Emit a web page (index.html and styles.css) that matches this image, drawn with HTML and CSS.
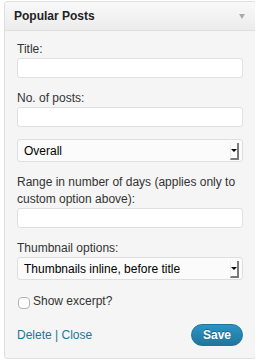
FILE: index.html
```html
<!DOCTYPE html>
<html lang="en">
<head>
  <meta charset="UTF-8">
  <title>Popular Posts widget</title>
  <link rel="stylesheet" href="styles.css">
</head>
<body>
  <div class="widget">
    <div class="widget-top">
      <h3>Popular Posts</h3>
      <span class="toggle"></span>
    </div>

    <div class="widget-inside">
      <div class="field">
        <label for="title">Title:</label>
        <input type="text" id="title">
      </div>

      <div class="field">
        <label for="limit">No. of posts:</label>
        <input type="text" id="limit">
      </div>

      <div class="field">
        <div class="select">
          <span>Overall</span>
          <span class="select-arrow"></span>
        </div>
      </div>

      <div class="field">
        <label for="range">Range in number of days (applies only to custom option above):</label>
        <input type="text" id="range">
      </div>

      <div class="field">
        <label>Thumbnail options:</label>
        <div class="select">
          <span>Thumbnails inline, before title</span>
          <span class="select-arrow"></span>
        </div>
      </div>

      <div class="field check">
        <input type="checkbox" id="excerpt">
        <label for="excerpt">Show excerpt?</label>
      </div>

      <div class="actions">
        <div class="links">
          <a href="#">Delete</a> | <a href="#">Close</a>
        </div>
        <button type="button">Save</button>
      </div>
    </div>
  </div>
</body>
</html>
```

FILE: styles.css
```css
body {
  font-family: 'Liberation Sans', Arial, sans-serif;
  font-size: 12px;
  color: #333;
  background: #fff;
  margin: 1px 4px;
}
.widget {
  width: 252px;
  box-sizing: border-box;
  border: 1px solid #dfdfdf;
  border-radius: 3px;
  background: #f5f5f5;
}
.widget-top {
  height: 28px;
  display: flex;
  align-items: center;
  justify-content: space-between;
  padding: 0 9px;
  border-bottom: 1px solid #dfdfdf;
  background: linear-gradient(#f9f9f9, #ececec);
  border-radius: 3px 3px 0 0;
}
.widget-top h3 {
  margin: 0;
  font-size: 12px;
  font-weight: bold;
  color: #222;
  line-height: 16px;
}
.toggle {
  width: 0;
  height: 0;
  border-left: 3px solid transparent;
  border-right: 3px solid transparent;
  border-top: 5px solid #aaa;
  margin-right: 1px;
}
.widget-inside {
  padding: 10px 12px 12px;
}
.field {
  margin-bottom: 12px;
}
.field label {
  display: block;
  line-height: 17px;
}
input[type="text"] {
  display: block;
  width: 100%;
  height: 20px;
  box-sizing: border-box;
  margin: 0;
  border: 1px solid #dfdfdf;
  border-radius: 3px;
  background: #fff;
}
.select {
  height: 23px;
  box-sizing: border-box;
  border: 1px solid #dfdfdf;
  border-radius: 3px;
  background: #fbfbfb;
  display: flex;
  align-items: center;
  justify-content: space-between;
  padding: 0 3px 0 6px;
  color: #000;
}
.select-arrow {
  width: 9px;
  height: 17px;
  box-sizing: border-box;
  background: #fdfdfd;
  border-left: 1px solid #eee;
  border-right: 2px solid #7a7a7a;
  border-bottom: 2px solid #7a7a7a;
  position: relative;
  margin-top: 2px;
}
.select-arrow::after {
  content: "";
  position: absolute;
  left: 0;
  top: 6px;
  border-left: 3px solid transparent;
  border-right: 3px solid transparent;
  border-top: 3px solid #000;
}
.check {
  display: flex;
  align-items: flex-start;
  margin-top: 13px;
  margin-bottom: 14px;
}
.check input {
  appearance: none;
  width: 12px;
  height: 12px;
  margin: 4px 3px 0 1px;
  border: 1px solid #b4b4b4;
  border-radius: 4px;
  background: #fff;
}
.actions {
  display: flex;
  justify-content: space-between;
  align-items: center;
  color: #21759b;
}
.links a {
  color: #21759b;
  text-decoration: none;
}
button {
  width: 52px;
  height: 22px;
  padding: 0;
  border: 1px solid #21759b;
  border-radius: 11px;
  background: linear-gradient(#2a95c5, #21759b);
  color: #fff;
  font-family: inherit;
  font-size: 12px;
  font-weight: bold;
  text-shadow: 0 -1px 0 rgba(0, 0, 0, 0.3);
}
```
